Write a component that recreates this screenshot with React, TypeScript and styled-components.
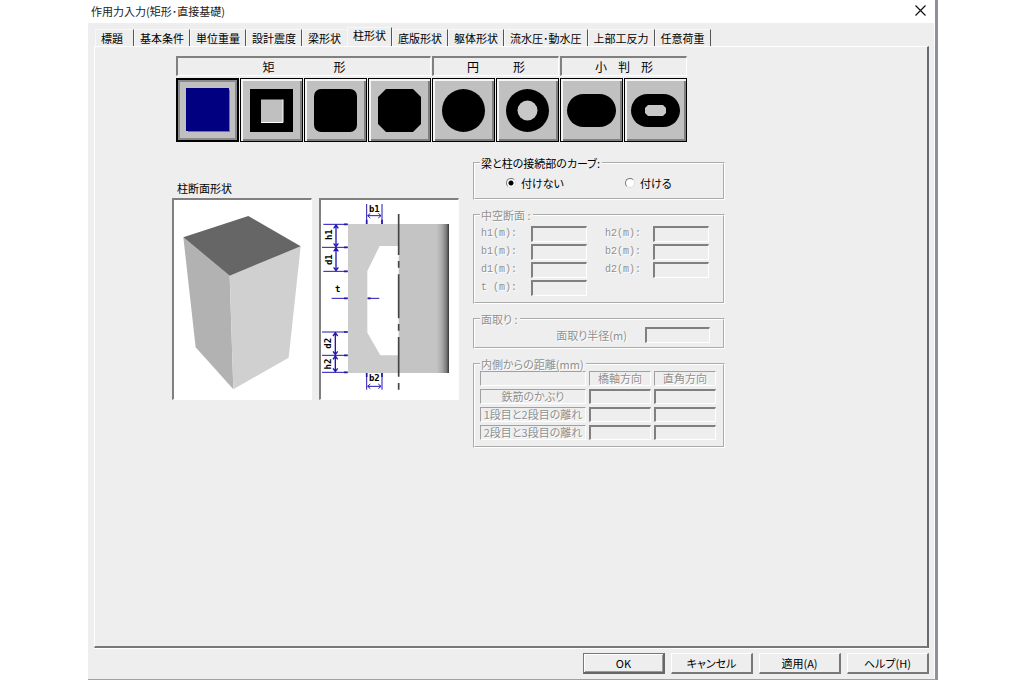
import React, { useState } from "react";
import styled, { createGlobalStyle, css } from "styled-components";

const GlobalStyle = createGlobalStyle`
  * { box-sizing: border-box; }
  body {
    margin: 0;
    background: #fff;
    color: #000;
    font-family: "Noto Sans CJK JP", "Liberation Sans", sans-serif;
    font-size: 11px;
    line-height: 14px;
    font-feature-settings: "palt";
  }
  button, input { font: inherit; color: inherit; }
`;

const sunken = css`
  border: solid;
  border-width: 2px 1px 1px 2px;
  border-color: #808080 #fff #fff #808080;
`;

const Page = styled.div`
  min-height: 100vh;
  padding: 0 86px 2px 88px;
  display: flex;
`;

const Dialog = styled.main`
  flex: 1;
  display: flex;
  flex-direction: column;
  border-right: 3px solid #8e909c;
  border-bottom: 1px solid #a0a0a0;
  background: #fff;
`;

const TitleBar = styled.header`
  height: 23px;
  padding: 0 9px 2px 3px;
  display: flex;
  align-items: center;
  justify-content: space-between;
`;

const Title = styled.h1`
  margin: 0;
  font-size: 11px;
  font-weight: 400;
  color: #222;
  font-feature-settings: normal;
`;

const CloseButton = styled.button`
  width: 12px;
  height: 12px;
  padding: 0;
  border: 0;
  background: none;
  display: flex;
  align-items: center;
  justify-content: center;
`;

const Body = styled.div`
  flex: 1;
  margin-right: 1px;
  padding: 4px 5px 5px 6px;
  display: flex;
  flex-direction: column;
  background: #eee;
`;

const TabBar = styled.nav`
  display: flex;
  align-items: flex-end;
  padding-left: 1px;
  font-feature-settings: normal;
`;

const Tab = styled.button<{ $active?: boolean; $beforeActive?: boolean; $first?: boolean }>`
  height: ${(p) => (p.$active ? 19 : 17)}px;
  padding: 0 5px ${(p) => (p.$active ? 4 : 1)}px;
  ${(p) => p.$first && "padding-right: 10px;"}
  border: solid;
  border-width: 1px 1px 0;
  border-color: #f8f8f8 ${(p) => (p.$beforeActive ? "#eee" : "#555")} transparent #f8f8f8;
  background: none;
  white-space: nowrap;
`;

const Panel = styled.section`
  flex: 1;
  padding: 9px 0 0 77px;
  border: solid;
  border-width: 1px 2px 2px 1px;
  border-color: #fff #686a70 #787878 #fff;
  box-shadow: 0 1px 0 #fff;
`;

const ShapePicker = styled.div`
  display: flex;
  gap: 1px;
  margin-left: 4px;
`;

const ShapeGroup = styled.div`
  display: flex;
  flex-direction: column;
  gap: 2px;
`;

const GroupTitle = styled.div<{ $gap: number }>`
  ${sunken};
  height: 20px;
  display: flex;
  justify-content: center;
  align-items: center;
  gap: ${(p) => p.$gap}px;
  font-size: 12px;
`;

const ShapeRow = styled.div`
  display: flex;
  gap: 1px;
`;

const ShapeButton = styled.button<{ $selected?: boolean }>`
  width: 63px;
  height: 64px;
  padding: 0;
  display: flex;
  align-items: center;
  justify-content: center;
  background: #c0c0c0;
  border: 1px solid #000;
  outline: 0;
  box-shadow: ${(p) =>
    p.$selected
      ? "inset 0 0 0 1px #000, inset 0 0 0 3px #8a8a8a"
      : "inset 2px 2px 0 #f4f4f4, inset -2px -2px 0 #808080"};
`;

const Columns = styled.div`
  display: flex;
  align-items: flex-start;
  gap: 14px;
  margin-top: 14px;
`;

const Preview = styled.div`
  padding-top: 25px;
`;

const PreviewTitle = styled.h2`
  margin: 0 0 3px 5px;
  font-size: 11px;
  font-weight: 400;
`;

const Pictures = styled.div`
  display: flex;
  gap: 7px;
`;

const Picture = styled.div`
  ${sunken};
  width: 140px;
  height: 202px;
  background: #fff;
  svg { display: block; }
`;

const Settings = styled.div`
  width: 252px;
  display: flex;
  flex-direction: column;
  gap: 8px;
`;

const Group = styled.fieldset<{ $off?: boolean }>`
  min-width: 0;
  margin: 0;
  padding: 0 5px 4px;
  border: 2px groove #fff;
  ${(p) => p.$off && "color: #909090; text-shadow: 1px 1px 0 #fff;"}
  legend { padding: 0 2px 0 1px; }
`;

const RadioRow = styled.div`
  display: flex;
  height: 24px;
  padding: 2px 0 0 26px;
  align-items: center;
`;

const RadioLabel = styled.label`
  width: 119px;
  flex: none;
  display: flex;
  align-items: center;
  gap: 5px;
`;

const Radio = styled.input.attrs({ type: "radio" })`
  appearance: none;
  width: 10px;
  height: 10px;
  margin: 0;
  border: 1px solid;
  border-color: #777 #ddd #ddd #777;
  border-radius: 50%;
  background: #fff;
  &:checked { background: radial-gradient(circle, #000 0 2px, #fff 3px); }
`;

const FieldGrid = styled.div`
  display: grid;
  grid-template-columns: 106px 104px;
  column-gap: 18px;
  row-gap: 2px;
  padding: 4px 0 2px 1px;
`;

const FieldPair = styled.div`
  display: flex;
  justify-content: space-between;
  align-items: center;
`;

const MonoLabel = styled.label`
  font-family: "Liberation Mono", monospace;
  font-size: 10px;
  line-height: 16px;
  white-space: pre;
`;

const TextBox = styled.input`
  ${sunken};
  width: 56px;
  height: 16px;
  padding: 0 2px;
  display: block;
  border-radius: 0;
  background: #eee;
  outline: 0;
`;

const ChamferRow = styled.div`
  display: flex;
  justify-content: flex-end;
  align-items: center;
  gap: 18px;
  padding: 1px 8px 0 0;
  input { width: 65px; }
`;

const Distances = styled.table`
  margin: -3px 0 -1px -3px;
  border-spacing: 3px;
  table-layout: fixed;
  width: 242px;
  font-size: 11px;
  th, td {
    height: 15px;
    padding: 0;
    line-height: 13px;
    font-weight: 400;
  }
  th, thead td {
    border: 1px solid;
    border-color: #a0a0a0 #fff #fff #a0a0a0;
    white-space: nowrap;
  }
  input {
    width: 100%;
    height: 15px;
  }
`;

const Footer = styled.footer`
  display: flex;
  justify-content: flex-end;
  gap: 6px;
  padding-top: 5px;
`;

const PushButton = styled.button<{ $primary?: boolean }>`
  width: 82px;
  height: 21px;
  padding: 0;
  background: #eee;
  border: solid;
  border-width: 1px 2px 2px 1px;
  border-color: ${(p) => (p.$primary ? "#777 #666 #666 #777" : "#fff #777 #777 #fff")};
  box-shadow: ${(p) => (p.$primary ? "inset 1px 1px 0 #fff, inset -1px -1px 0 #999" : "none")};
`;

const tabs = [
  "標題", "基本条件", "単位重量", "設計震度", "梁形状", "柱形状",
  "底版形状", "躯体形状", "流水圧･動水圧", "上部工反力", "任意荷重",
];

const Icon = ({ children }: { children: React.ReactNode }) => (
  <svg width="51" height="46" viewBox="0 0 51 46" aria-hidden="true">{children}</svg>
);

const shapeGroups = [
  {
    title: "矩形",
    gap: 59,
    shapes: [
      { name: "矩形", icon: <><path d="M6 3h42v42H6z" fill="#777" /><path d="M4 1h43v43H4z" fill="#000080" /></> },
      { name: "中空矩形", icon: <><path d="M4 2h43v43H4z" /><path d="M15 12.5h22v23H15z" fill="#c0c0c0" /><path d="M15 35.5h22v-23" fill="none" stroke="#fff" /></> },
      { name: "角丸矩形", icon: <rect x="4" y="2" width="43" height="43" rx="7" /> },
      { name: "面取り矩形", icon: <path d="M12 2h27l8 8v27l-8 8H12l-8-8V10z" /> },
    ],
  },
  {
    title: "円形",
    gap: 34,
    shapes: [
      { name: "円形", icon: <circle cx="25.5" cy="23.5" r="21.5" /> },
      { name: "中空円形", icon: <><circle cx="25.5" cy="23.5" r="21.5" /><circle cx="25.5" cy="23.5" r="10" fill="#c8c8c8" /></> },
    ],
  },
  {
    title: "小判形",
    gap: 11,
    shapes: [
      { name: "小判形", icon: <rect x="1" y="7" width="49" height="33" rx="16.5" /> },
      { name: "中空小判形", icon: <><rect x="1" y="7" width="49" height="33" rx="16.5" /><path d="M18 18h15l3 3v5l-3 3H18l-3-3v-5z" fill="#c8c8c8" /></> },
    ],
  },
];

const ColumnView = () => (
  <svg width="136" height="198" viewBox="27 75 408 594" role="img" aria-label="柱の立体図">
    <path d="M55 187 194 302 205 643 92 517z" fill="#b2b2b2" />
    <path d="M194 302 407 214 371 548 205 643z" fill="#d0d0d0" />
    <path d="M55 187 250 123 407 214 194 302z" fill="#666" />
  </svg>
);

const UpDown = ({ x, a, b }: { x: number; a: number; b: number }) => (
  <path
    d={`M${x} ${a + 2}V${b - 2}M${x - 7} ${a + 12}L${x} ${a + 2}L${x + 7} ${a + 12}M${x - 7} ${b - 12}L${x} ${b - 2}L${x + 7} ${b - 12}`}
    strokeWidth="4"
  />
);

const SideLabel = ({ x, y, children }: { x: number; y: number; children: string }) => (
  <text transform={`translate(${x} ${y}) rotate(-90)`}>{children}</text>
);

const SectionView = () => (
  <svg width="136" height="198" viewBox="471 75 408 594" role="img" aria-label="柱の断面図">
    <defs>
      <linearGradient id="edge">
        <stop offset="0" stopColor="#c4c4c4" />
        <stop offset="0.45" stopColor="#a8a8a8" />
        <stop offset="0.8" stopColor="#777" />
        <stop offset="1" stopColor="#333" />
      </linearGradient>
    </defs>
    <path d="M552 147H704V213H647L610 288V473L649 541H704V594H552z" fill="#ccc" />
    <path d="M704 147H855V594H704z" fill="#c4c4c4" />
    <path d="M818 147H855V594H818z" fill="url(#edge)" />
    <path d="M704 117V240M704 258V278M704 298V430M704 447V467M704 486V605M704 624V644" stroke="#444" strokeWidth="5" />
    <g fill="none" stroke="#2418b0" strokeWidth="3">
      <path d="M478 148H551M474 217H551M478 289H551M474 471H551M474 541H551M474 592H551" />
      <path d="M503 370H551M611 370H646" />
      <path d="M540 370h11M611 370h9M540 217h11M540 148h11M540 289h11M540 471h11M540 541h11M540 592h11" strokeWidth="5" />
      <path d="M608 87V147M654 87V147M608 594V644M654 594V644" />
      <path d="M608 134v13M654 134v13M608 594v12M654 594v12" strokeWidth="5" />
      <path d="M611 122H651M619 115L611 122L619 129M643 115L651 122L643 129M611 634H651M619 627L611 634L619 641M643 627L651 634L643 641" />
      <UpDown x={516} a={148} b={217} />
      <UpDown x={516} a={217} b={289} />
      <UpDown x={514} a={471} b={541} />
      <UpDown x={514} a={541} b={592} />
    </g>
    <g fontFamily="DejaVu Sans Mono, monospace" fontWeight="700" fontSize="27" textAnchor="middle">
      <text x="631" y="110">b1</text>
      <text x="631" y="619">b2</text>
      <text x="521" y="351">t</text>
      <SideLabel x={503} y={179}>h1</SideLabel>
      <SideLabel x={503} y={254}>d1</SideLabel>
      <SideLabel x={501} y={505}>d2</SideLabel>
      <SideLabel x={501} y={567}>h2</SideLabel>
    </g>
  </svg>
);

const hollowFields = ["h1", "h2", "b1", "b2", "d1", "d2", "t "];
const distanceRows = ["鉄筋のかぶり", "1段目と2段目の離れ", "2段目と3段目の離れ"];

export default function App() {
  const [tab, setTab] = useState("柱形状");
  const [shape, setShape] = useState("矩形");
  const [curve, setCurve] = useState("付けない");

  return (
    <>
      <GlobalStyle />
      <Page>
        <Dialog>
          <TitleBar>
            <Title>作用力入力(矩形･直接基礎)</Title>
            <CloseButton aria-label="閉じる">
              <svg width="11" height="11" viewBox="0 0 11 11" aria-hidden="true">
                <path d="M.5.5l10 10M10.5.5l-10 10" stroke="#111" strokeWidth="1.2" />
              </svg>
            </CloseButton>
          </TitleBar>
          <Body>
            <TabBar>
              {tabs.map((name, i) => (
                <Tab
                  key={name}
                  $first={i === 0}
                  $active={name === tab}
                  $beforeActive={tabs[i + 1] === tab}
                  onClick={() => setTab(name)}
                >
                  {name}
                </Tab>
              ))}
            </TabBar>
            <Panel>
              <ShapePicker>
                {shapeGroups.map((group) => (
                  <ShapeGroup key={group.title}>
                    <GroupTitle $gap={group.gap}>
                      {[...group.title].map((c) => <span key={c}>{c}</span>)}
                    </GroupTitle>
                    <ShapeRow>
                      {group.shapes.map((s) => (
                        <ShapeButton
                          key={s.name}
                          aria-label={s.name}
                          $selected={s.name === shape}
                          onClick={() => setShape(s.name)}
                        >
                          <Icon>{s.icon}</Icon>
                        </ShapeButton>
                      ))}
                    </ShapeRow>
                  </ShapeGroup>
                ))}
              </ShapePicker>
              <Columns>
                <Preview>
                  <PreviewTitle>柱断面形状</PreviewTitle>
                  <Pictures>
                    <Picture><ColumnView /></Picture>
                    <Picture><SectionView /></Picture>
                  </Pictures>
                </Preview>
                <Settings>
                  <Group>
                    <legend>梁と柱の接続部のカーブ:</legend>
                    <RadioRow>
                      {["付けない", "付ける"].map((v) => (
                        <RadioLabel key={v}>
                          <Radio name="curve" checked={curve === v} onChange={() => setCurve(v)} />
                          {v}
                        </RadioLabel>
                      ))}
                    </RadioRow>
                  </Group>
                  <Group $off disabled>
                    <legend>中空断面 :</legend>
                    <FieldGrid>
                      {hollowFields.map((f) => (
                        <FieldPair key={f}>
                          <MonoLabel htmlFor={f.trim()}>{f}(m):</MonoLabel>
                          <TextBox id={f.trim()} />
                        </FieldPair>
                      ))}
                    </FieldGrid>
                  </Group>
                  <Group $off disabled>
                    <legend>面取り :</legend>
                    <ChamferRow>
                      <label htmlFor="radius">面取り半径(m)</label>
                      <TextBox id="radius" />
                    </ChamferRow>
                  </Group>
                  <Group $off disabled>
                    <legend>内側からの距離(mm)</legend>
                    <Distances>
                      <colgroup>
                        <col width="106" />
                        <col width="62" />
                        <col width="62" />
                      </colgroup>
                      <thead>
                        <tr>
                          <td />
                          <th scope="col">橋軸方向</th>
                          <th scope="col">直角方向</th>
                        </tr>
                      </thead>
                      <tbody>
                        {distanceRows.map((r) => (
                          <tr key={r}>
                            <th scope="row">{r}</th>
                            <td><TextBox aria-label={`${r} 橋軸方向`} /></td>
                            <td><TextBox aria-label={`${r} 直角方向`} /></td>
                          </tr>
                        ))}
                      </tbody>
                    </Distances>
                  </Group>
                </Settings>
              </Columns>
            </Panel>
            <Footer>
              <PushButton $primary>OK</PushButton>
              <PushButton>キャンセル</PushButton>
              <PushButton>適用(A)</PushButton>
              <PushButton>ヘルプ(H)</PushButton>
            </Footer>
          </Body>
        </Dialog>
      </Page>
    </>
  );
}
